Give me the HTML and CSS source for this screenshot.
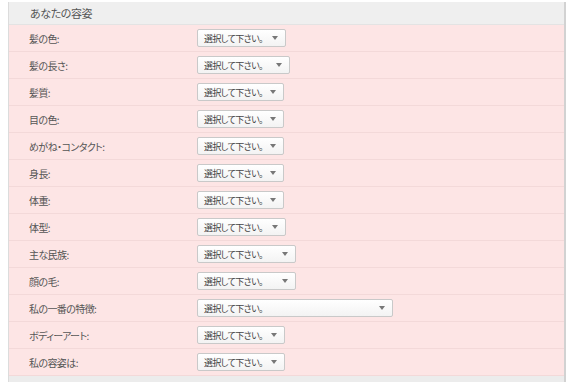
FILE: index.html
```html
<!DOCTYPE html>
<html lang="ja">
<head>
    <meta charset="UTF-8">
    <meta name="viewport" content="width=device-width, initial-scale=1.0">
    <title>あなたの容姿</title>
    <link rel="stylesheet" href="styles.css">
</head>
<body>
    <div class="panel">
        <div class="panel-head">あなたの容姿</div>

        <div class="row">
            <span class="label">髪の色:</span>
            <span class="select w89"><span class="select-text">選択して下さい。</span></span>
        </div>
        <div class="row">
            <span class="label">髪の長さ:</span>
            <span class="select w93"><span class="select-text">選択して下さい。</span></span>
        </div>
        <div class="row">
            <span class="label">髪質:</span>
            <span class="select w87"><span class="select-text">選択して下さい。</span></span>
        </div>
        <div class="row">
            <span class="label">目の色:</span>
            <span class="select w87"><span class="select-text">選択して下さい。</span></span>
        </div>
        <div class="row">
            <span class="label">めがね・コンタクト:</span>
            <span class="select w87"><span class="select-text">選択して下さい。</span></span>
        </div>
        <div class="row">
            <span class="label">身長:</span>
            <span class="select w87"><span class="select-text">選択して下さい。</span></span>
        </div>
        <div class="row">
            <span class="label">体重:</span>
            <span class="select w87"><span class="select-text">選択して下さい。</span></span>
        </div>
        <div class="row">
            <span class="label">体型:</span>
            <span class="select w89"><span class="select-text">選択して下さい。</span></span>
        </div>
        <div class="row">
            <span class="label">主な民族:</span>
            <span class="select w99"><span class="select-text">選択して下さい。</span></span>
        </div>
        <div class="row">
            <span class="label">顔の毛:</span>
            <span class="select w99"><span class="select-text">選択して下さい。</span></span>
        </div>
        <div class="row">
            <span class="label">私の一番の特徴:</span>
            <span class="select w196"><span class="select-text">選択して下さい。</span></span>
        </div>
        <div class="row">
            <span class="label">ボディーアート:</span>
            <span class="select w88"><span class="select-text">選択して下さい。</span></span>
        </div>
        <div class="row">
            <span class="label">私の容姿は:</span>
            <span class="select w88"><span class="select-text">選択して下さい。</span></span>
        </div>

        <div class="panel-foot"></div>
    </div>
</body>
</html>
```

FILE: styles.css
```css
body {
    margin: 0;
    background-color: #fff;
    font-family: "Noto Sans CJK JP", "Liberation Sans", sans-serif;
    font-feature-settings: "palt";
    color: #555;
}
.panel {
    margin: 2px 0 0 8px;
    width: 555px;
    border-left: 1px solid #dcdcdc;
    border-right: 2px solid #d2d2d2;
}
.panel-head {
    height: 22px;
    line-height: 22px;
    padding-left: 21px;
    font-size: 11px;
    letter-spacing: -0.4px;
    background-color: #efefef;
    border-bottom: 1px solid #e3e3e3;
}
.row {
    display: flex;
    align-items: center;
    height: 26px;
    padding-left: 20px;
    background-color: #fde5e5;
    border-bottom: 1px solid #f3d9d9;
}
.label {
    width: 168px;
    font-size: 10px;
    letter-spacing: -0.6px;
}
.select {
    display: flex;
    align-items: center;
    justify-content: space-between;
    box-sizing: border-box;
    height: 18px;
    padding: 0 7px 0 6px;
    background: linear-gradient(#fff, #f3f3f3);
    border: 1px solid #c9c9c9;
    border-radius: 2px;
    font-size: 9px;
    letter-spacing: -0.6px;
    color: #444;
}
.select::after {
    content: "";
    border-left: 3px solid transparent;
    border-right: 3px solid transparent;
    border-top: 4px solid #777;
}
.w87 { width: 87px; }
.w88 { width: 88px; }
.w89 { width: 89px; }
.w93 { width: 93px; }
.w99 { width: 99px; }
.w196 { width: 196px; }
.panel-foot {
    height: 6px;
    background-color: #ececec;
}
```
